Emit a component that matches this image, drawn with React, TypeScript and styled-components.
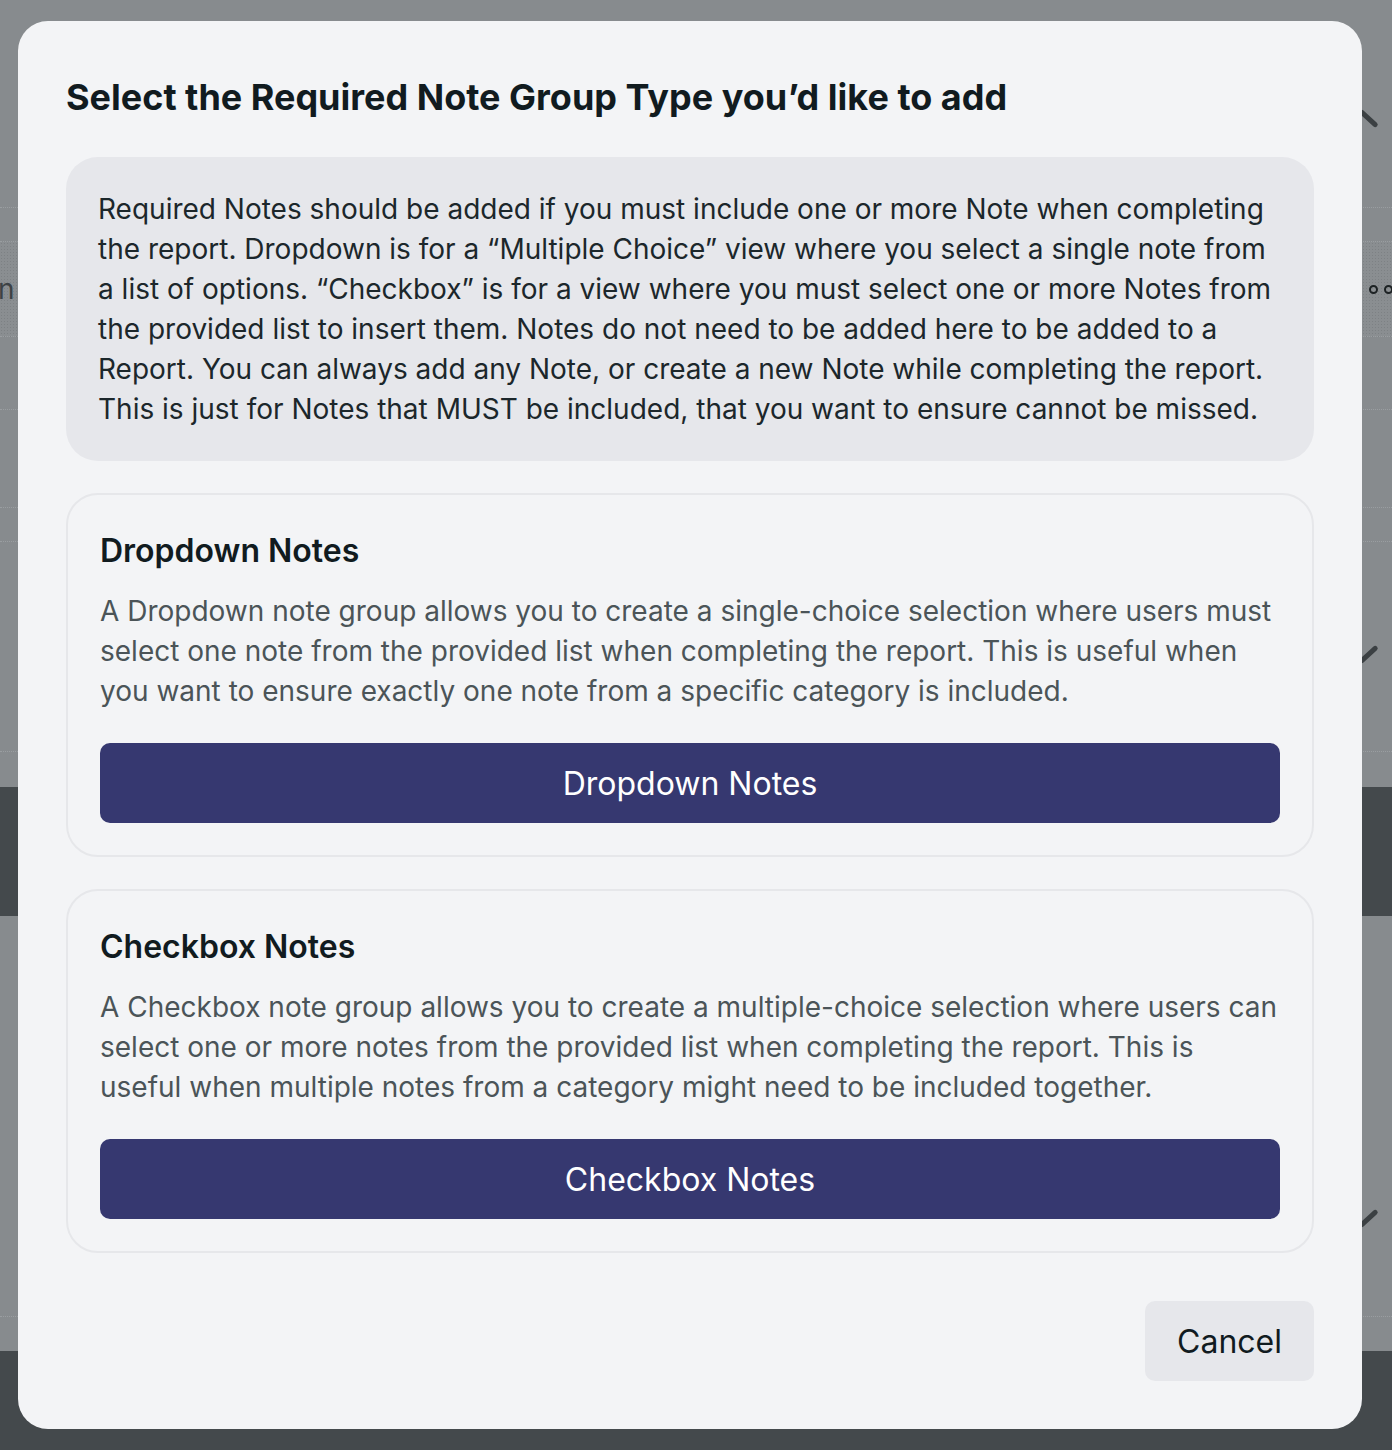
import React from "react";
import styled, { createGlobalStyle } from "styled-components";

const GlobalStyle = createGlobalStyle`
  html, body {
    margin: 0;
    padding: 0;
    background: #878b8e;
  }
  body {
    font-family: Inter, "Noto Sans", "Liberation Sans", sans-serif;
    -webkit-font-smoothing: antialiased;
  }
  * { box-sizing: border-box; }
`;

/* Dimmed page that sits behind the dialog */
const Page = styled.div`
  position: relative;
  width: 1392px;
  height: 1450px;
  overflow: hidden;
  display: flex;
  flex-direction: column;
  background: #878b8e;
`;

const Band = styled.div<{ $h: number; $tone?: "plain" | "dots" | "dark"; $line?: boolean }>`
  position: relative;
  flex: 0 0 ${(p) => p.$h}px;
  display: flex;
  align-items: center;
  justify-content: space-between;
  border-bottom: ${(p) => (p.$line ? "1px dotted #9a9ea1" : "none")};
  background: ${(p) =>
    p.$tone === "dark"
      ? "#44494c"
      : p.$tone === "dots"
      ? "radial-gradient(#7d8184 0.6px, #8a8e91 0.8px) 0 0 / 3px 3px"
      : "#878b8e"};
`;

const FaintText = styled.span`
  font-size: 28px;
  line-height: 40px;
  color: #3d4245;
  margin-left: -2px;
`;

const Dots = styled.span`
  display: flex;
  gap: 6px;
  margin-right: -1px;
`;

const Dot = styled.span`
  width: 9px;
  height: 9px;
  border: 2.5px solid #1d2224;
  border-radius: 50%;
`;

const Stroke = styled.span<{ $dir: "down" | "up" }>`
  position: absolute;
  right: 12px;
  width: 23px;
  height: 5px;
  border-radius: 3px;
  background: #3b4043;
  transform: rotate(${(p) => (p.$dir === "down" ? "42deg" : "-42deg")});
`;

/* Dialog */
const Dialog = styled.div`
  position: absolute;
  top: 21px;
  left: 18px;
  width: 1344px;
  height: 1408px;
  background: #f3f4f6;
  border-radius: 30px;
  padding: 48px;
  display: flex;
  flex-direction: column;
  gap: 32px;
`;

const Title = styled.h2`
  margin: 0;
  font-size: 36px;
  line-height: 56px;
  font-weight: 700;
  color: #111b1f;
`;

const InfoBox = styled.div`
  background: #e6e7eb;
  border-radius: 32px;
  padding: 32px;
  font-size: 28px;
  line-height: 40px;
  color: #1c272b;
`;

const Card = styled.section`
  border: 2px solid #e6e7ea;
  border-radius: 32px;
  padding: 32px;
  display: flex;
  flex-direction: column;
`;

const CardTitle = styled.h3`
  margin: 0;
  font-size: 32px;
  line-height: 48px;
  font-weight: 600;
  color: #111b1f;
`;

const CardText = styled.p`
  margin: 16px 0 32px;
  font-size: 28px;
  line-height: 40px;
  color: #4b5458;
`;

const PrimaryButton = styled.button`
  height: 80px;
  width: 100%;
  border: none;
  border-radius: 10px;
  background: #363870;
  color: #ffffff;
  font-family: inherit;
  font-size: 32px;
  font-weight: 400;
  cursor: pointer;
`;

const Footer = styled.div`
  display: flex;
  justify-content: flex-end;
  margin-top: 16px;
`;

const SecondaryButton = styled.button`
  height: 80px;
  padding: 0 32px;
  border: none;
  border-radius: 10px;
  background: #e6e7eb;
  color: #111b1f;
  font-family: inherit;
  font-size: 32px;
  cursor: pointer;
`;

const groups = [
  {
    title: "Dropdown Notes",
    text:
      "A Dropdown note group allows you to create a single-choice selection where users must select one note from the provided list when completing the report. This is useful when you want to ensure exactly one note from a specific category is included.",
  },
  {
    title: "Checkbox Notes",
    text:
      "A Checkbox note group allows you to create a multiple-choice selection where users can select one or more notes from the provided list when completing the report. This is useful when multiple notes from a category might need to be included together.",
  },
];

export default function App() {
  return (
    <>
      <GlobalStyle />
      <Page>
        <Band $h={208} $line>
          <Stroke $dir="down" style={{ top: 116 }} />
        </Band>
        <Band $h={34} $line />
        <Band $h={95} $tone="dots" $line>
          <FaintText>n</FaintText>
          <Dots>
            <Dot />
            <Dot />
          </Dots>
        </Band>
        <Band $h={73} $line />
        <Band $h={98} $line />
        <Band $h={34} $line />
        <Band $h={210} $line>
          <Stroke $dir="up" style={{ top: 110 }} />
        </Band>
        <Band $h={35} />
        <Band $h={129} $tone="dark" />
        <Band $h={401} $line>
          <Stroke $dir="up" style={{ top: 300 }} />
        </Band>
        <Band $h={34} />
        <Band $h={99} $tone="dark" />

        <Dialog role="dialog" aria-modal="true">
          <Title>Select the Required Note Group Type you’d like to add</Title>
          <InfoBox>
            Required Notes should be added if you must include one or more Note when completing
            the report. Dropdown is for a “Multiple Choice” view where you select a single note from
            a list of options. “Checkbox” is for a view where you must select one or more Notes from
            the provided list to insert them. Notes do not need to be added here to be added to a
            Report. You can always add any Note, or create a new Note while completing the report.
            This is just for Notes that MUST be included, that you want to ensure cannot be missed.
          </InfoBox>
          {groups.map((g) => (
            <Card key={g.title}>
              <CardTitle>{g.title}</CardTitle>
              <CardText>{g.text}</CardText>
              <PrimaryButton>{g.title}</PrimaryButton>
            </Card>
          ))}
          <Footer>
            <SecondaryButton>Cancel</SecondaryButton>
          </Footer>
        </Dialog>
      </Page>
    </>
  );
}
